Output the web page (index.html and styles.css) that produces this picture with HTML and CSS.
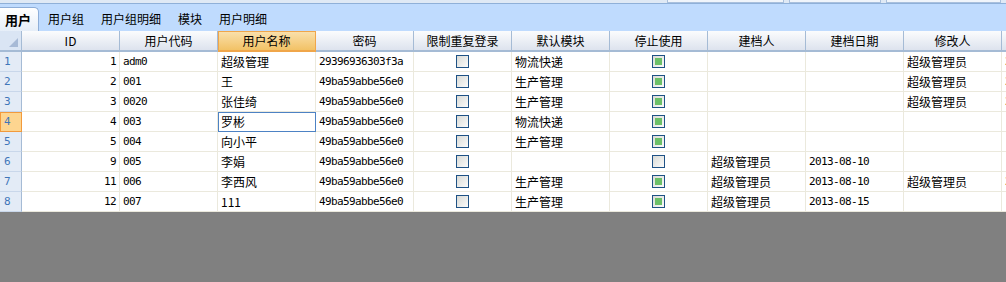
FILE: index.html
```html
<!DOCTYPE html>
<html lang="zh-CN">
<head>
    <meta charset="UTF-8">
    <title>用户</title>
    <link rel="stylesheet" href="styles.css">
</head>
<body>
    <div class="top-strip">
        <span class="ghost-tab" style="width:115px"></span>
        <span class="ghost-tab" style="width:90px"></span>
        <span class="ghost-tab" style="width:113px"></span>
    </div>
    <div class="tabbar">
        <div class="tab active">用户</div>
        <div class="tab">用户组</div>
        <div class="tab">用户组明细</div>
        <div class="tab">模块</div>
        <div class="tab">用户明细</div>
    </div>

    <div class="grid" id="grid">
        <div class="row head">
            <div class="cell corner"><span class="tri"></span></div>
            <div class="cell">ID</div>
            <div class="cell">用户代码</div>
            <div class="cell sorted">用户名称</div>
            <div class="cell">密码</div>
            <div class="cell">限制重复登录</div>
            <div class="cell">默认模块</div>
            <div class="cell">停止使用</div>
            <div class="cell">建档人</div>
            <div class="cell">建档日期</div>
            <div class="cell">修改人</div>
            <div class="cell">修改日期</div>
        </div>
        <!-- rows are added by the script below -->
    </div>

    <script>
        const users = [
            { id: 1, code: "adm0", name: "超级管理", pwd: "29396936303f3a", module: "物流快递", stop: true, creator: "", created: "", editor: "超级管理员", edited: "2013-08-10" },
            { id: 2, code: "001", name: "王", pwd: "49ba59abbe56e0", module: "生产管理", stop: true, creator: "", created: "", editor: "超级管理员", edited: "2013-08-10" },
            { id: 3, code: "0020", name: "张佳绮", pwd: "49ba59abbe56e0", module: "生产管理", stop: true, creator: "", created: "", editor: "超级管理员", edited: "2013-08-10" },
            { id: 4, code: "003", name: "罗彬", pwd: "49ba59abbe56e0", module: "物流快递", stop: true, creator: "", created: "", editor: "", edited: "" },
            { id: 5, code: "004", name: "向小平", pwd: "49ba59abbe56e0", module: "生产管理", stop: true, creator: "", created: "", editor: "", edited: "" },
            { id: 9, code: "005", name: "李娟", pwd: "49ba59abbe56e0", module: "", stop: false, creator: "超级管理员", created: "2013-08-10", editor: "", edited: "" },
            { id: 11, code: "006", name: "李西风", pwd: "49ba59abbe56e0", module: "生产管理", stop: true, creator: "超级管理员", created: "2013-08-10", editor: "超级管理员", edited: "2013-08-10" },
            { id: 12, code: "007", name: "111", pwd: "49ba59abbe56e0", module: "生产管理", stop: true, creator: "超级管理员", created: "2013-08-15", editor: "", edited: "" },
        ];
        const current = 3; // selected row index

        const grid = document.getElementById("grid");
        users.forEach((u, i) => {
            const sel = i === current;
            grid.innerHTML += `
                <div class="row">
                    <div class="cell rowhead${sel ? " on" : ""}">${i + 1}</div>
                    <div class="cell num">${u.id}</div>
                    <div class="cell mono">${u.code}</div>
                    <div class="cell${sel ? " focus" : ""}">${u.name}</div>
                    <div class="cell mono">${u.pwd}</div>
                    <div class="cell center"><span class="check"></span></div>
                    <div class="cell">${u.module}</div>
                    <div class="cell center"><span class="check${u.stop ? " checked" : ""}"></span></div>
                    <div class="cell">${u.creator}</div>
                    <div class="cell mono">${u.created}</div>
                    <div class="cell">${u.editor}</div>
                    <div class="cell mono">${u.edited}</div>
                </div>
            `;
        });
    </script>
</body>
</html>
```
FILE: styles.css
```css
body {
    margin: 0;
    background-color: #808080;
    font-family: "Noto Sans CJK SC", "DejaVu Sans", sans-serif;
    font-size: 12px;
    color: #000;
    overflow: hidden;
}
.top-strip {
    height: 3px;
    background-color: #dfe9f5;
    border-bottom: 1px solid #8fb0d8;
    display: flex;
    justify-content: flex-end;
    padding-right: 5px;
    gap: 5px;
}
.ghost-tab {
    height: 2px;
    border: 1px solid #a9c0dd;
    border-top: none;
    background-color: #f0f5fb;
}
.tabbar {
    height: 27px;
    background-color: #bfdbfe;
    display: flex;
    align-items: flex-end;
}
.tab {
    height: 24px;
    line-height: 23px;
    padding: 0 8px 0 9px;
}
.tab.active {
    width: 39px;
    box-sizing: border-box;
    padding: 0 0 0 5px;
    font-weight: bold;
    font-size: 13px;
    background: linear-gradient(#ffffff, #e6eef8);
    border-top: 1px solid #8eaed8;
    border-right: 1px solid #8eaed8;
    border-top-right-radius: 5px;
}
.grid {
    background-color: #fff;
    width: 1200px;
}
.row {
    display: grid;
    grid-template-columns: 22px repeat(11, 98px);
    height: 20px;
}
.row.head {
    height: 21px;
}
.cell {
    box-sizing: border-box;
    border-right: 1px solid #ebe9dd;
    border-bottom: 1px solid #ebe9dd;
    padding: 0 3px;
    line-height: 19px;
    white-space: nowrap;
    overflow: hidden;
}
.head .cell {
    text-align: center;
    line-height: 19px;
    background: linear-gradient(#fbfcfd, #dde3ee);
    border-right: 1px solid #a5bbd5;
    border-bottom: 2px solid #a5bbd5;
}
.head .cell.sorted {
    background: linear-gradient(#fae1ae, #f2c266);
    border-right: 1px solid #f0a64a;
    border-bottom: 2px solid #f0a64a;
    box-shadow: inset 1px 1px 0 #f0a64a;
}
.head .cell.corner {
    position: relative;
    background: #dae5f4;
}
.tri {
    position: absolute;
    right: 3px;
    bottom: 3px;
    width: 0;
    height: 0;
    border-left: 9px solid transparent;
    border-bottom: 9px solid #a7bad6;
}
.rowhead {
    background-color: #e3ebf6;
    color: #3f76b9;
    border-right: 1px solid #a5bbd5;
    border-bottom: 1px solid #c9d7ea;
    font-family: "DejaVu Sans Mono", monospace;
    font-size: 11px;
    padding-left: 4px;
}
.rowhead.on {
    background-color: #fdd590;
    border: 1px solid #f29a3c;
    padding-left: 3px;
    line-height: 18px;
}
.num, .mono {
    font-family: "DejaVu Sans Mono", monospace;
    font-size: 11px;
    letter-spacing: -0.62px;
}
.num {
    text-align: right;
}
.focus {
    border: 1px solid #4d82c4;
    padding-left: 2px;
    line-height: 17px;
}
.center {
    display: flex;
    align-items: center;
    justify-content: center;
}
.check {
    width: 13px;
    height: 13px;
    box-sizing: border-box;
    border: 1px solid #1f5285;
    background: linear-gradient(135deg, #d9dad6, #fbfbfb);
    position: relative;
}
.check.checked::after {
    content: "";
    position: absolute;
    left: 2px;
    top: 2px;
    width: 7px;
    height: 7px;
    background-color: #6dc069;
}
```
